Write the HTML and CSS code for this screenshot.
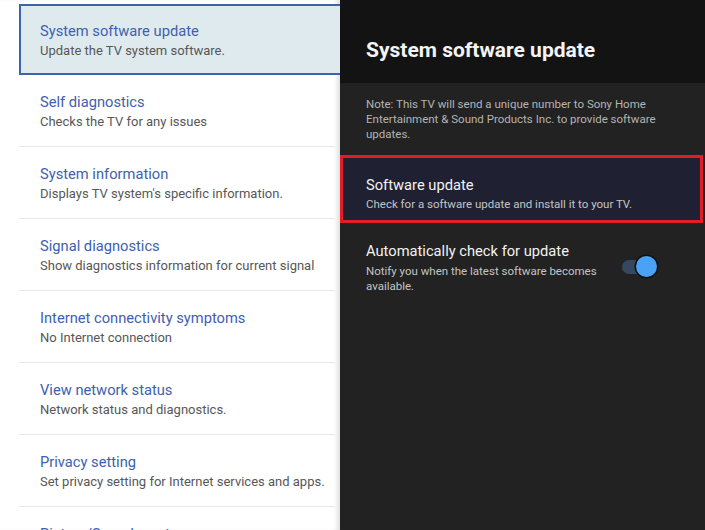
FILE: index.html
```html
<!DOCTYPE html>
<html>
<head>
<meta charset="utf-8">
<link rel="stylesheet" href="styles.css">
</head>
<body>
<div class="screen">
  <div class="left">
    <ul class="menu">
      <li class="item selected"><div class="t">System software update</div><div class="s">Update the TV system software.</div></li>
      <li class="item"><div class="t">Self diagnostics</div><div class="s">Checks the TV for any issues</div></li>
      <li class="item"><div class="t">System information</div><div class="s">Displays TV system's specific information.</div></li>
      <li class="item"><div class="t">Signal diagnostics</div><div class="s">Show diagnostics information for current signal</div></li>
      <li class="item"><div class="t">Internet connectivity symptoms</div><div class="s">No Internet connection</div></li>
      <li class="item"><div class="t">View network status</div><div class="s">Network status and diagnostics.</div></li>
      <li class="item"><div class="t">Privacy setting</div><div class="s">Set privacy setting for Internet services and apps.</div></li>
      <li class="item"><div class="t">Picture/Sound reset</div><div class="s">Reset settings</div></li>
    </ul>
  </div>
  <div class="right">
    <div class="head"><h1>System software update</h1></div>
    <div class="body">
      <p class="note">Note: This TV will send a unique number to Sony Home Entertainment &amp; Sound Products Inc. to provide software updates.</p>
      <div class="opt focus">
        <div class="ot">Software update</div>
        <div class="os">Check for a software update and install it to your TV.</div>
      </div>
      <div class="opt row">
        <div class="txt">
          <div class="ot">Automatically check for update</div>
          <div class="os wrap">Notify you when the latest software becomes available.</div>
        </div>
        <div class="toggle"><span class="track"></span><span class="knob"></span></div>
      </div>
    </div>
  </div>
</div>
</body>
</html>
```

FILE: styles.css
```css
* { box-sizing: border-box; }
html, body { margin: 0; padding: 0; }
body {
  width: 705px;
  height: 530px;
  overflow: hidden;
  font-family: Roboto, "Liberation Sans", sans-serif;
  background: #222;
}
.screen {
  display: flex;
  width: 705px;
  height: 530px;
}
.left {
  width: 340px;
  flex: none;
  background: #fff;
  overflow: hidden;
  box-shadow: inset -5px 0 4px -2px rgba(0,0,0,0.12);
}
.menu {
  list-style: none;
  margin: 0;
  padding: 4px 0 0 19px;
}
.item {
  height: 72px;
  padding: 18px 0 0 21px;
  border-bottom: 1px solid #e8e8e8;
  margin-right: 5px;
}
.item.selected {
  background: #dfeaef;
  border: 2px solid #3a65a8;
  border-right: none;
  margin-right: 0;
  padding: 16px 0 0 19px;
  height: 71px;
}
.t {
  font-size: 14.7px;
  line-height: 18px;
  color: #3e60b0;
  white-space: nowrap;
}
.s {
  font-size: 13px;
  line-height: 18px;
  color: #575757;
  white-space: nowrap;
  margin-top: 2px;
}
.right {
  flex: 1;
  display: flex;
  flex-direction: column;
  background: #222;
}
.head {
  height: 83px;
  background: #131313;
  padding: 38px 0 0 26px;
}
.head h1 {
  margin: 0;
  font-size: 21px;
  line-height: 24px;
  font-weight: 700;
  color: #f4f4f4;
}
.body {
  padding-top: 14px;
}
.note {
  margin: 0;
  padding: 0 20px 0 26px;
  font-size: 11.5px;
  line-height: 15px;
  color: #b4b4b4;
  max-width: 345px;
}
.opt {
  padding: 0 0 0 26px;
}
.focus {
  margin-top: 13px;
  margin-right: 2px;
  height: 68px;
  background: #1f2132;
  border: 3px solid #e11e28;
  padding: 18px 0 0 23px;
}
.ot {
  font-size: 14.7px;
  line-height: 18px;
  color: #f2f2f2;
}
.os {
  font-size: 11.5px;
  line-height: 15px;
  color: #c4c4c4;
  margin-top: 3px;
}
.row {
  display: flex;
  align-items: flex-start;
  margin-top: 19px;
}
.txt { width: 250px; }
.wrap { margin-top: 4px; }
.toggle {
  position: relative;
  width: 36px;
  height: 22px;
  margin: 14px 0 0 6px;
}
.track {
  position: absolute;
  left: 0;
  top: 4px;
  width: 30px;
  height: 14px;
  border-radius: 7px;
  background: #35485f;
}
.knob {
  position: absolute;
  left: 14px;
  top: 0;
  width: 21px;
  height: 21px;
  border-radius: 50%;
  background: #4aa2f6;
  box-shadow: 0 0 0 1.5px #111;
}
```
